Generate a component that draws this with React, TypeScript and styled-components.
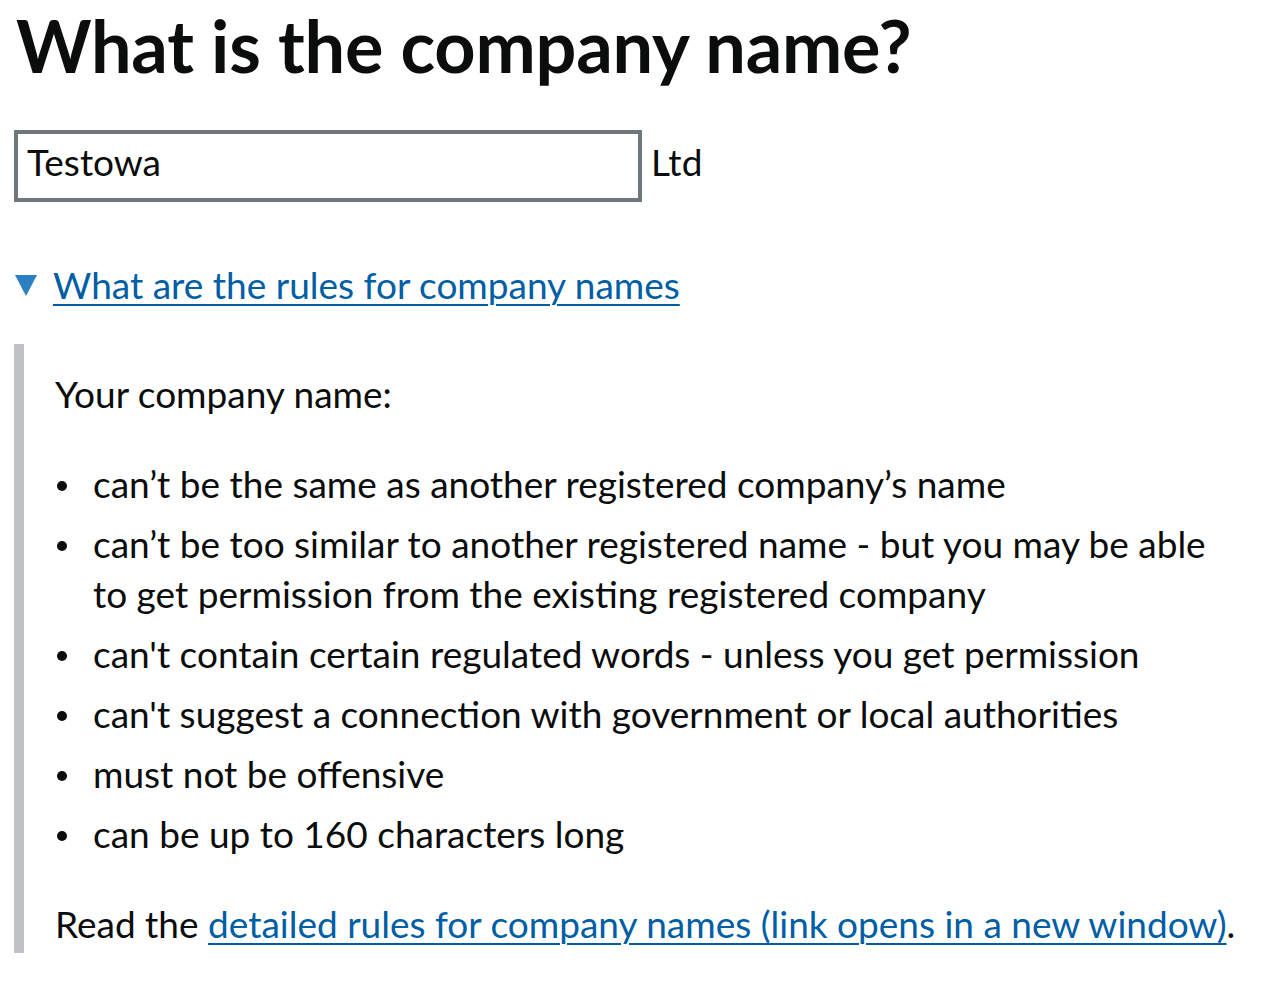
import React from "react";
import styled, { createGlobalStyle } from "styled-components";

const GlobalStyle = createGlobalStyle`
  html, body { margin: 0; padding: 0; background: #ffffff; }
  body {
    font-family: Lato, "Liberation Sans", Arial, sans-serif;
    color: #0b0c0c;
    -webkit-font-smoothing: antialiased;
  }
`;

const Page = styled.main`
  padding: 5px 28px 0 14px;
`;

const Heading = styled.h1`
  margin: 0 0 45px 2px;
  font-size: 72px;
  line-height: 80px;
  font-weight: 700;
  color: #0b0c0c;
  letter-spacing: -0.2px;
`;

const InputRow = styled.div`
  display: flex;
  align-items: flex-start;
  margin-bottom: 58px;
`;

const TextInput = styled.input`
  box-sizing: border-box;
  width: 628px;
  height: 72px;
  margin: 0;
  padding: 0 9px 9px 9px;
  border: 4px solid #6f777b;
  border-radius: 0;
  background: #ffffff;
  font-family: inherit;
  font-size: 37px;
  color: #0b0c0c;
  outline: none;
`;

const Suffix = styled.span`
  margin-left: 9px;
  padding-top: 7px;
  font-size: 37px;
  line-height: 50px;
`;

const Details = styled.div``;

const Summary = styled.div`
  display: flex;
  align-items: flex-start;
  gap: 16px;
  margin-bottom: 34px;
  cursor: pointer;
`;

const Arrow = styled.span`
  display: block;
  width: 0;
  height: 0;
  margin-top: 15px;
  margin-left: 1px;
  border-left: 11.5px solid transparent;
  border-right: 11.5px solid transparent;
  border-top: 21px solid #2b80c4;
`;

const Link = styled.a`
  color: #005ea5;
  text-decoration: underline;
  text-decoration-thickness: 2px;
  text-underline-offset: 5px;
  cursor: pointer;
`;

const SummaryLink = styled(Link)`
  font-size: 37px;
  line-height: 50px;
`;

const Panel = styled.div`
  border-left: 10px solid #bfc1c3;
  padding: 25px 0 4px 31px;
  font-size: 37px;
  line-height: 50px;
`;

const Para = styled.p<{ $last?: boolean }>`
  margin: 0 0 ${(p) => (p.$last ? "0" : "40px")} 0;
`;

const List = styled.ul`
  list-style: none;
  margin: 0 0 40px 0;
  padding: 0 0 0 38px;
`;

const Item = styled.li`
  position: relative;
  margin-bottom: 10px;
  &::before {
    content: "";
    position: absolute;
    left: -36px;
    top: 22px;
    width: 10px;
    height: 10px;
    border-radius: 50%;
    background: #0b0c0c;
  }
`;

const rules = [
  "can’t be the same as another registered company’s name",
  "can’t be too similar to another registered name - but you may be able to get permission from the existing registered company",
  "can't contain certain regulated words - unless you get permission",
  "can't suggest a connection with government or local authorities",
  "must not be offensive",
  "can be up to 160 characters long",
];

export default function App() {
  return (
    <>
      <GlobalStyle />
      <Page>
        <Heading>What is the company name?</Heading>
        <InputRow>
          <TextInput type="text" defaultValue="Testowa" aria-label="Company name" />
          <Suffix>Ltd</Suffix>
        </InputRow>
        <Details>
          <Summary>
            <Arrow />
            <SummaryLink>What are the rules for company names</SummaryLink>
          </Summary>
          <Panel>
            <Para>Your company name:</Para>
            <List>
              {rules.map((r) => (
                <Item key={r}>{r}</Item>
              ))}
            </List>
            <Para $last>
              Read the <Link>detailed rules for company names (link opens in a new window)</Link>.
            </Para>
          </Panel>
        </Details>
      </Page>
    </>
  );
}
